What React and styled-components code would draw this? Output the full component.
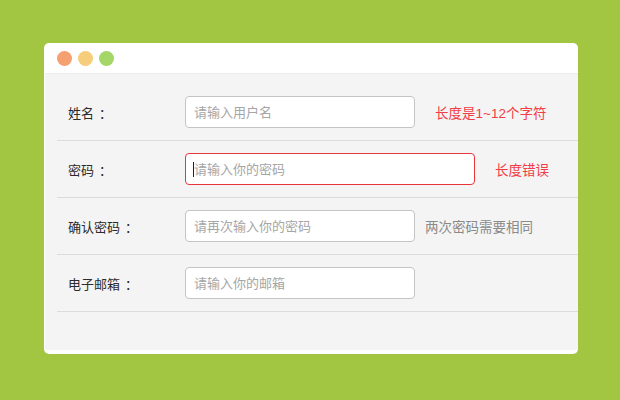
import styled, { createGlobalStyle } from "styled-components";

const GlobalStyle = createGlobalStyle`
  html, body {
    margin: 0;
    padding: 0;
    background-color: #a2c542;
    font-family: "Liberation Sans", "Noto Sans CJK SC", sans-serif;
  }
`;

const StyledPage = styled.div`
  width: 620px;
  height: 400px;
  padding: 43px 0 0 44px;
  box-sizing: border-box;
`;

const StyledWindow = styled.div`
  width: 534px;
  height: 311px;
  padding: 0 0 4px 1px;
  box-sizing: border-box;

  display: flex;
  flex-direction: column;

  border-radius: 5px;
  background-color: #fff;
  overflow: hidden;
`;

const StyledTitleBar = styled.div`
  height: 30px;
  padding-left: 12px;

  display: flex;
  align-items: center;
  gap: 6px;

  border-bottom: 1px solid #ececec;
`;

const StyledDot = styled.span`
  width: 15px;
  height: 15px;

  border-radius: 50%;
  background-color: ${({ color }) => color};
`;

const StyledBody = styled.div`
  flex: 1;
  padding: 10px 0 0 12px;

  background-color: #f4f4f4;
`;

const StyledRow = styled.div`
  height: 56px;
  padding-left: 11px;

  display: flex;
  align-items: center;

  border-bottom: 1px solid #dcdcdc;
`;

const StyledLabel = styled.label`
  width: 117px;

  font-size: 13px;
  color: #2b2b2b;
`;

const StyledColon = styled.span`
  margin-left: 5px;
`;

const StyledField = styled.div`
  position: relative;
  display: flex;
`;

const StyledInput = styled.input`
  width: ${({ wide }) => (wide ? "290px" : "230px")};
  height: 32px;
  padding: 0 8px;
  box-sizing: border-box;

  border: 1px solid ${({ error }) => (error ? "#e8353b" : "#c4c4c4")};
  border-radius: 4px;
  background-color: #fff;
  outline: none;

  font-family: inherit;
  font-size: 13px;
  color: #333;

  &::placeholder {
    color: #a6a6a6;
  }
`;

const StyledCaret = styled.span`
  position: absolute;
  left: 8px;
  top: 9px;

  width: 1px;
  height: 15px;

  background-color: #222;
`;

const StyledHint = styled.span`
  margin-left: ${({ gap }) => gap}px;

  font-size: 13.5px;
  color: ${({ error }) => (error ? "#f23c46" : "#8a8a8a")};
`;

const rows = [
  {
    label: "姓名",
    placeholder: "请输入用户名",
    hint: "长度是1~12个字符",
    hintError: true,
    gap: 20,
  },
  {
    label: "密码",
    placeholder: "请输入你的密码",
    hint: "长度错误",
    hintError: true,
    gap: 20,
    wide: true,
    error: true,
    focused: true,
  },
  {
    label: "确认密码",
    placeholder: "请再次输入你的密码",
    hint: "两次密码需要相同",
    gap: 10,
  },
  {
    label: "电子邮箱",
    placeholder: "请输入你的邮箱",
  },
];

const App = () => {
  return (
    <>
      <GlobalStyle />
      <StyledPage>
        <StyledWindow>
          <StyledTitleBar>
            <StyledDot color="#f5a070" />
            <StyledDot color="#f6cd7a" />
            <StyledDot color="#a4d667" />
          </StyledTitleBar>

          <StyledBody>
            {rows.map((row) => (
              <StyledRow key={row.label}>
                <StyledLabel>
                  {row.label}
                  <StyledColon>：</StyledColon>
                </StyledLabel>

                <StyledField>
                  <StyledInput
                    placeholder={row.placeholder}
                    wide={row.wide}
                    error={row.error}
                  />
                  {row.focused && <StyledCaret />}
                </StyledField>

                {row.hint && (
                  <StyledHint gap={row.gap} error={row.hintError}>
                    {row.hint}
                  </StyledHint>
                )}
              </StyledRow>
            ))}
          </StyledBody>
        </StyledWindow>
      </StyledPage>
    </>
  );
};

export default App;
